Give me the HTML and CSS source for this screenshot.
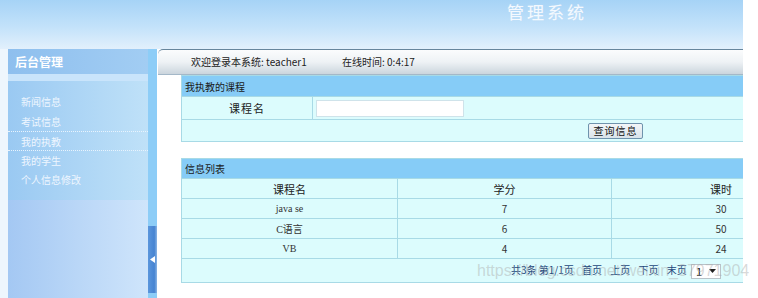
FILE: index.html
```html
<!DOCTYPE html>
<html lang="zh">
<head>
<meta charset="utf-8">
<title>管理系统</title>
<link rel="stylesheet" href="styles.css">
</head>
<body>
<div class="page">
  <header class="header">
    <h1 class="title">管理系统</h1>
  </header>
  <div class="body">
    <aside class="sidebar">
      <div class="side-title">后台管理</div>
      <div class="side-band"></div>
      <ul class="menu">
        <li>新闻信息</li>
        <li>考试信息</li>
        <li class="active">我的执教</li>
        <li>我的学生</li>
        <li>个人信息修改</li>
      </ul>
      <div class="side-rest"></div>
    </aside>
    <div class="splitter">
      <div class="split-handle">
        <svg width="5" height="7" viewBox="0 0 5 7"><polygon points="5,0 5,7 0,3.5" fill="#ffffff"/></svg>
      </div>
    </div>
    <main class="main">
      <div class="topbar">
        <span class="welcome">欢迎登录本系统: teacher1</span>
        <span class="online">在线时间: 0:4:17</span>
      </div>
      <table class="panel search">
        <colgroup><col class="w-label"><col></colgroup>
        <tr><th colspan="2" class="panel-head">我执教的课程</th></tr>
        <tr class="row1">
          <td class="label">课程名</td>
          <td class="field"><span class="input"></span></td>
        </tr>
        <tr class="row2">
          <td colspan="2" class="btn-cell"><span class="btn">查询信息</span></td>
        </tr>
      </table>
      <table class="panel list">
        <colgroup><col class="w-c1"><col class="w-c2"><col></colgroup>
        <tr><th colspan="3" class="panel-head">信息列表</th></tr>
        <tr class="cols">
          <td>课程名</td>
          <td>学分</td>
          <td>课时</td>
        </tr>
        <tr><td class="serif">java se</td><td>7</td><td>30</td></tr>
        <tr><td class="serif">C语言</td><td>6</td><td>50</td></tr>
        <tr><td class="serif">VB</td><td>4</td><td>24</td></tr>
        <tr class="pager-row">
          <td colspan="3" class="pager">
            <span>共3条</span>
            <span class="g1">第1/1页</span>
            <span class="gap">首页</span>
            <span class="gap">上页</span>
            <span class="gap">下页</span>
            <span class="gap">末页</span>
            <span class="select">1<svg width="7" height="4" viewBox="0 0 7 4"><polygon points="0,0 7,0 3.5,4" fill="#222"/></svg></span>
          </td>
        </tr>
      </table>
    </main>
  </div>
  <div class="watermark">https://blog.csdn.net/weixin_37971904</div>
</div>
</body>
</html>
```

FILE: styles.css
```css
html, body {
  margin: 0;
  padding: 0;
  background: #ffffff;
}
body {
  font-family: "Noto Sans CJK SC", "DejaVu Sans", sans-serif;
  font-size: 10px;
  color: #222;
}
.page {
  position: relative;
  width: 758px;
  height: 298px;
  overflow: hidden;
}
.header {
  width: 743px;
  height: 49px;
  background: linear-gradient(to bottom, #a6d3f6 0%, #c3e2fa 55%, #e2f0fc 100%);
  box-sizing: border-box;
  padding-left: 507px;
}
.title {
  margin: 0;
  padding-top: 1px;
  font-size: 17px;
  font-weight: normal;
  letter-spacing: 3px;
  line-height: 22px;
  color: #f4f9ff;
  text-shadow: 0 0 1px #c6def3;
}
.body {
  display: flex;
  width: 743px;
  height: 249px;
  padding-left: 8px;
  box-sizing: border-box;
  background: linear-gradient(to right, #eef6fd 0, #eef6fd 8px, transparent 8px);
}
.sidebar {
  width: 140px;
  display: flex;
  flex-direction: column;
}
.side-title {
  height: 25px;
  line-height: 25px;
  padding-left: 7px;
  font-size: 12px;
  font-weight: bold;
  color: #ffffff;
  background: linear-gradient(to right, #8ebfee, #a2cdf3);
}
.side-band {
  height: 7px;
  background: #c9e4fb;
}
.menu {
  list-style: none;
  margin: 0;
  padding: 11px 0 10px 0;
  background: linear-gradient(to right, #9ac9f2, #bfe1f8);
}
.menu li {
  height: 19.5px;
  line-height: 19.5px;
  padding-left: 13px;
  color: #eef6ff;
  font-size: 10px;
  box-sizing: border-box;
}
.menu li.active {
  border-top: 1px dotted #e8f3fd;
  border-bottom: 1px dotted #e8f3fd;
}
.side-rest {
  flex: 1;
  background: linear-gradient(to right, #a4c8f3, #cfe5fb);
}
.splitter {
  width: 9px;
  background: #8dcdf7;
  display: flex;
  flex-direction: column;
  padding-top: 177px;
  box-sizing: border-box;
}
.split-handle {
  height: 67px;
  background: linear-gradient(to right, #5b96dc, #4684d2 70%, #8ab4e4);
  display: flex;
  align-items: center;
  justify-content: center;
}
.main {
  flex: 1;
  overflow: hidden;
  min-width: 0;
}
.topbar {
  margin-left: 1px;
  width: 700px;
  height: 26px;
  box-sizing: border-box;
  border-top: 1px solid #66859c;
  border-bottom: 1px solid #a4b8c8;
  border-top-left-radius: 5px;
  background: linear-gradient(to bottom, #fbfcfd, #eef2f5 50%, #cbd5dd);
  padding-left: 33px;
  line-height: 24px;
  font-size: 10px;
  color: #222;
}
.online {
  margin-left: 33px;
}
.panel {
  margin-left: 24px;
  width: 650px;
  border-collapse: collapse;
  table-layout: fixed;
  background: #dcfcfd;
}
.panel td, .panel th {
  border: 1px solid #a8dae6;
  padding: 0;
}
.w-label { width: 131px; }
.w-c1 { width: 216px; }
.w-c2 { width: 214px; }
.panel-head {
  background: #86ccf7;
  text-align: left;
  font-weight: normal;
  padding-left: 3px !important;
  font-size: 10px;
  color: #1a1a1a;
}
.search .panel-head {
  height: 20px;
}
.row1 td {
  height: 22px;
}
.label {
  text-align: center;
  font-size: 11px;
  letter-spacing: 1px;
}
.field {
  padding-left: 3px !important;
}
.input {
  display: block;
  width: 146px;
  height: 15px;
  background: #ffffff;
  border: 1px solid #cfe3ea;
}
.row2 td {
  height: 21px;
}
.btn-cell {
  padding-left: 406px !important;
}
.btn {
  display: inline-block;
  width: 53px;
  height: 14px;
  line-height: 14px;
  text-align: center;
  border: 1px solid #6f93ad;
  border-radius: 2px;
  background: linear-gradient(to bottom, #f3f6f8, #d9e3ea);
  font-size: 10px;
  letter-spacing: 1px;
  color: #111;
  vertical-align: middle;
}
.list {
  margin-top: 16px;
}
.list .panel-head {
  height: 19px;
}
.list td {
  height: 19px;
  text-align: center;
  font-size: 10px;
  color: #333;
}
.list .cols td {
  font-size: 11px;
  color: #222;
}
.serif {
  font-family: "Liberation Serif", "Noto Sans CJK SC", serif;
  font-size: 10px;
}
.list .pager-row td {
  height: 23px;
}
.pager {
  text-align: left !important;
  padding-left: 329px !important;
  font-size: 10px !important;
  color: #23467a !important;
  white-space: nowrap;
}
.pager .g1 {
  margin-left: 0;
}
.pager .gap {
  margin-left: 6px;
}
.select {
  display: inline-flex;
  align-items: center;
  gap: 7px;
  margin-left: 2px;
  width: 30px;
  height: 15px;
  box-sizing: border-box;
  padding-left: 4px;
  background: #ffffff;
  border: 1px solid #b9c3c9;
  color: #111;
  font-size: 11px;
  vertical-align: middle;
}
.watermark {
  position: absolute;
  left: 477px;
  top: 262px;
  font-family: "Liberation Sans", Arial, sans-serif;
  font-size: 16px;
  color: rgba(170, 170, 170, 0.45);
  white-space: nowrap;
  pointer-events: none;
}
```
